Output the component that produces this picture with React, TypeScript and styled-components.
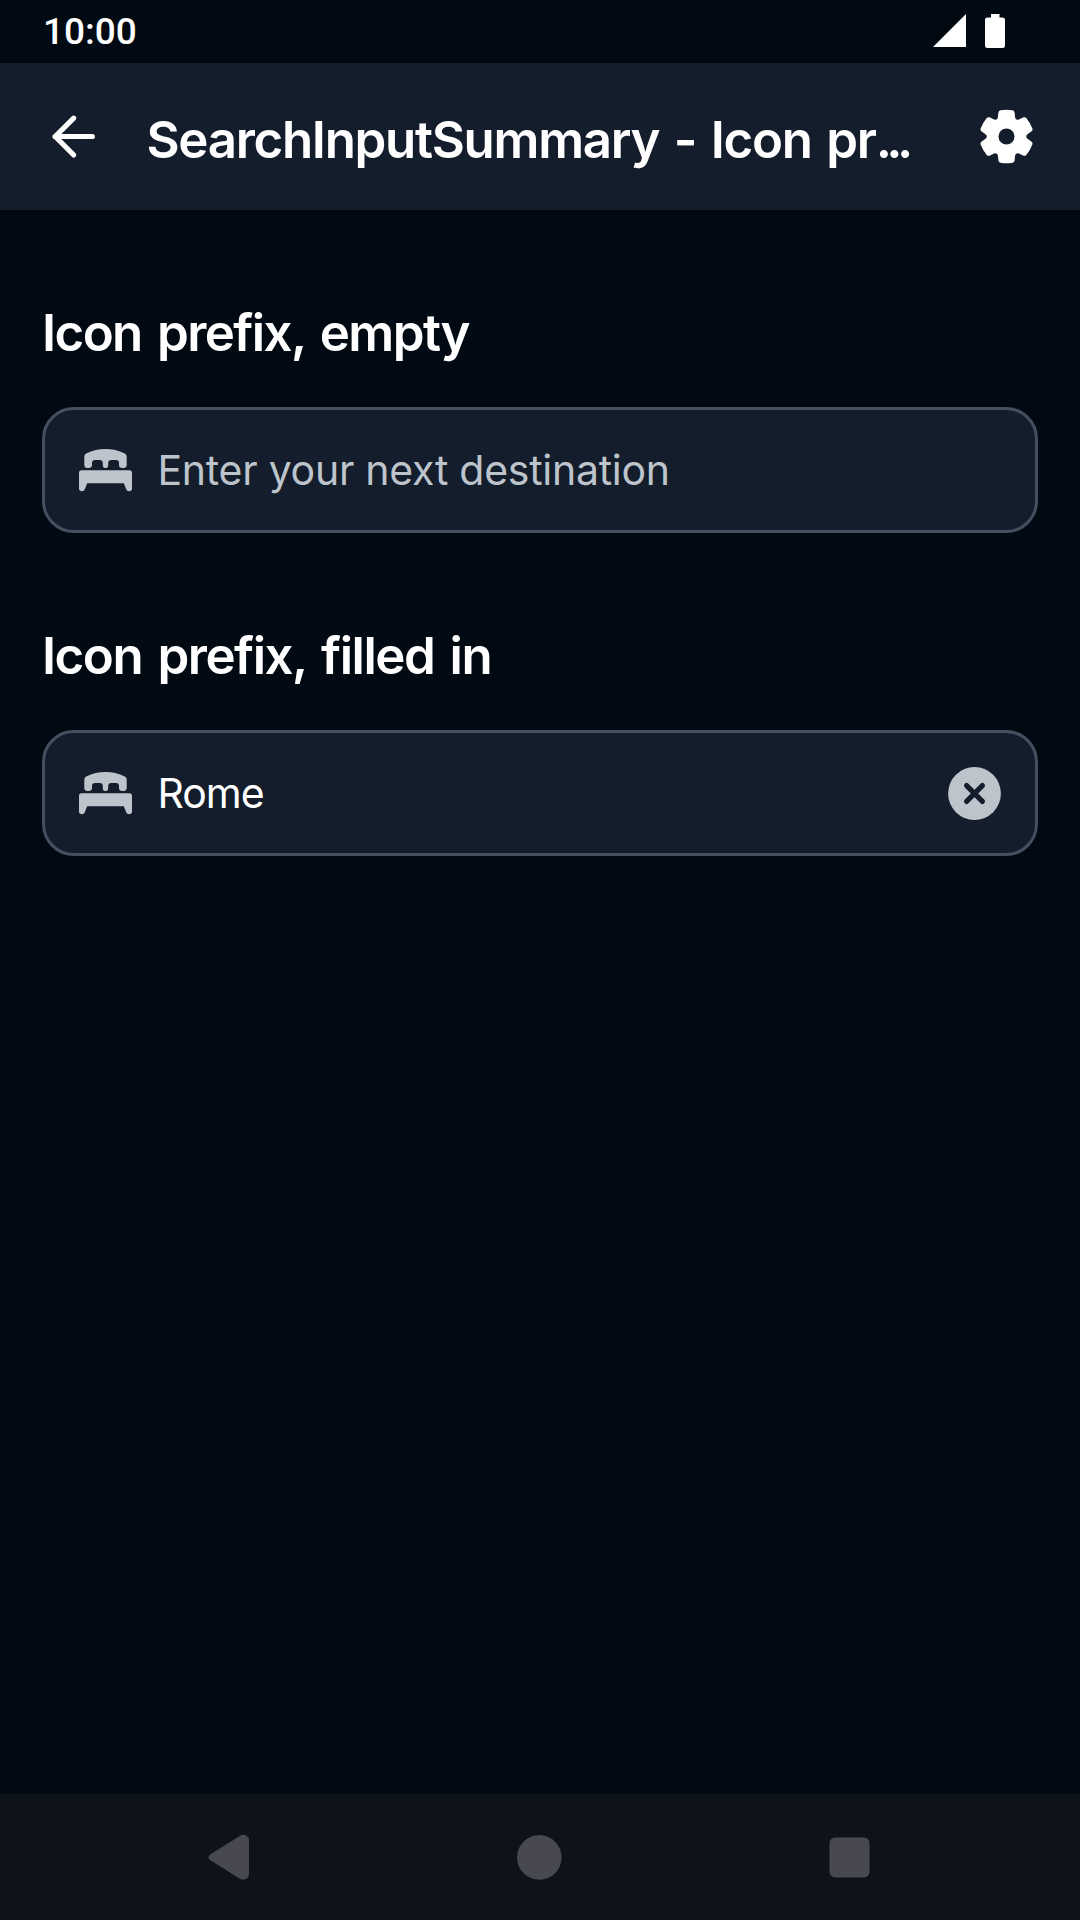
import React from "react";
import styled, { createGlobalStyle } from "styled-components";

const color = {
  canvas: "#010913",
  surface: "#141d2b",
  line: "#44505f",
  textPrimary: "#ffffff",
  textSecondary: "#bdc4cb",
  navBar: "#0e131b",
  navIcon: "#484850",
};

const GlobalStyle = createGlobalStyle`
  * { box-sizing: border-box; }
  body { margin: 0; background: ${color.canvas}; }
  svg { display: block; flex: none; }
`;

const Screen = styled.div`
  display: flex;
  flex-direction: column;
  width: 1080px;
  height: 1920px;
  overflow: hidden;
  background: ${color.canvas};
  color: ${color.textPrimary};
  font-family: Inter, "Liberation Sans", sans-serif;
`;

const StatusBar = styled.div`
  display: flex;
  align-items: center;
  justify-content: space-between;
  height: 63px;
  padding: 0 75px 0 43px;
`;

const Clock = styled.span`
  font: 500 37px/43px Roboto, sans-serif;
`;

const StatusIcons = styled.div`
  display: flex;
  gap: 19px;
  padding-bottom: 1px;
`;

const AppBar = styled.header`
  display: flex;
  align-items: center;
  height: 147px;
  padding: 0 42px;
  background: ${color.surface};
`;

const IconButton = styled.button`
  flex: none;
  padding: 0;
  border: 0;
  background: none;
  color: inherit;
`;

const Title = styled.h1`
  flex: 1;
  margin: 0 0 0 41.5px;
  padding-top: 6px;
  font-size: 51px;
  font-weight: 630;
  line-height: 60px;
  letter-spacing: -1.3px;
  word-spacing: 3px;
  white-space: nowrap;
`;

const Ellipsis = styled.span`
  letter-spacing: -5.6px;
`;

const Content = styled.main`
  flex: 1;
  padding: 0 42px;
`;

const Section = styled.section`
  padding-top: 92.5px;
`;

const SectionTitle = styled.h2<{ $tracking: number }>`
  margin: 0 0 44.5px;
  font-size: 51px;
  font-weight: 630;
  line-height: 60px;
  letter-spacing: ${(p) => p.$tracking}px;
  word-spacing: 4px;
  white-space: nowrap;
`;

const SearchField = styled.div`
  display: flex;
  align-items: center;
  height: 126px;
  padding: 0 29px;
  border: 3px solid ${color.line};
  border-radius: 32px;
  background: ${color.surface};
  color: ${color.textSecondary};
`;

const FieldText = styled.span<{ $filled?: boolean; $tracking: number }>`
  flex: 1;
  margin-left: 20.5px;
  font-size: 41px;
  font-weight: 400;
  line-height: 54px;
  letter-spacing: ${(p) => p.$tracking}px;
  white-space: nowrap;
  color: ${(p) => (p.$filled ? color.textPrimary : color.textSecondary)};
`;

const NavBar = styled.nav`
  display: flex;
  align-items: center;
  justify-content: space-between;
  height: 126px;
  padding: 0 210px 0 208px;
  background: ${color.navBar};
  color: ${color.navIcon};
`;

const BackArrow = () => (
  <svg width="63" height="63" viewBox="0 0 63 63" fill="none" stroke="currentColor" strokeWidth="5.2" strokeLinecap="round" strokeLinejoin="round">
    <path d="M50.3 31.5H13M31.7 13.2L13.2 31.5L31.7 50" />
  </svg>
);

/* One tooth, drawn around the origin and repeated every 60 degrees. */
const tooth: [string, number[]][] = [
  ["Q", [-27, -50, -25.5, -57]],
  ["L", [-23.8, -72]],
  ["Q", [-23, -77, -18, -78]],
  ["Q", [0, -81, 18, -78]],
  ["Q", [23, -77, 23.8, -72]],
  ["L", [25.5, -57]],
  ["Q", [27, -50, 29.5, -51.1]],
];

const rotated = (points: number[], turn: number) => {
  const a = (turn * Math.PI) / 3;
  const out: string[] = [];
  for (let i = 0; i < points.length; i += 2) {
    const x = points[i] / 2.96;
    const y = points[i + 1] / 2.96;
    out.push((x * Math.cos(a) - y * Math.sin(a)).toFixed(2));
    out.push((x * Math.sin(a) + y * Math.cos(a)).toFixed(2));
  }
  return out.join(" ");
};

const gearPath =
  "M" + rotated([-29.5, -51.1], 0) +
  [0, 1, 2, 3, 4, 5].map((k) => tooth.map(([c, pts]) => c + rotated(pts, k)).join("")).join("") +
  "Z M8 0A8 8 0 1 0 -8 0A8 8 0 1 0 8 0Z";

const Gear = () => (
  <svg width="63" height="63" viewBox="-31.5 -31.5 63 63" fill="currentColor">
    <path fillRule="evenodd" d={gearPath} />
  </svg>
);

const Signal = () => (
  <svg width="33" height="34" viewBox="0 0 33 34" fill="currentColor">
    <path d="M0 33L33 0V33Z" />
  </svg>
);

const Battery = () => (
  <svg width="20" height="34" viewBox="0 0 20 34" fill="currentColor">
    <path d="M6 0H14.5V3.5H17.5Q20 3.5 20 6V31.5Q20 34 17.5 34H2.5Q0 34 0 31.5V6Q0 3.5 2.5 3.5H6Z" />
  </svg>
);

const Bed = () => (
  <svg width="63" height="63" viewBox="0 -1 63 63" fill="currentColor">
    <path d="M10.3 16.6Q10.3 14.4 12.2 13.4Q21.5 9 31.5 9Q41.5 9 50.8 13.4Q52.7 14.4 52.7 16.6V24.8Q52.7 28 49.5 28H48.2Q45 28 45 24.8V23Q45 20 42 20H37.3Q34.2 20 34.2 23V25.2Q34.2 28 31.5 28Q28.8 28 28.8 25.2V23Q28.8 20 25.7 20H21Q18 20 18 23V24.8Q18 28 14.8 28H13.5Q10.3 28 10.3 24.8Z" />
    <path d="M7.5 30.3H55.5Q58 30.3 58 32.8V48.5Q58 51.3 55 51.3Q52.8 51.3 52.2 49.3L49.8 43.2H13.2L10.8 49.3Q10.2 51.3 8 51.3Q5 51.3 5 48.5V32.8Q5 30.3 7.5 30.3Z" />
  </svg>
);

const Clear = () => (
  <svg width="63" height="63" viewBox="0 0 63 63">
    <circle cx="31.5" cy="31.5" r="26.4" fill="currentColor" />
    <path d="M23.6 23.6L39.4 39.4M39.4 23.6L23.6 39.4" fill="none" stroke={color.surface} strokeWidth="5.2" strokeLinecap="round" />
  </svg>
);

const NavBack = () => (
  <svg width="42" height="46" viewBox="0 0 42 46" fill="currentColor">
    <path d="M32.2 1.7Q35.2 0.1 38.2 1.6Q41 3.3 41 6.6V40Q41 43.3 38.2 45Q35.2 46 32.2 44.9L2.5 26.3Q-1.3 23.3 2.5 20.3Z" />
  </svg>
);

const NavHome = () => (
  <svg width="46" height="46" viewBox="0 0 46 46" fill="currentColor">
    <circle cx="22.3" cy="23.4" r="22.3" />
  </svg>
);

const NavRecents = () => (
  <svg width="41" height="42" viewBox="0 0 41 42" fill="currentColor">
    <rect x="0.5" y="1.4" width="40" height="40" rx="5.5" />
  </svg>
);

export default function App() {
  return (
    <Screen>
      <GlobalStyle />
      <StatusBar>
        <Clock>10:00</Clock>
        <StatusIcons>
          <Signal />
          <Battery />
        </StatusIcons>
      </StatusBar>
      <AppBar>
        <IconButton aria-label="Back">
          <BackArrow />
        </IconButton>
        <Title>
          SearchInputSummary - Icon pr<Ellipsis>...</Ellipsis>
        </Title>
        <IconButton aria-label="Settings">
          <Gear />
        </IconButton>
      </AppBar>
      <Content>
        <Section>
          <SectionTitle $tracking={-1.6}>Icon prefix, empty</SectionTitle>
          <SearchField>
            <Bed />
            <FieldText $tracking={-0.27}>Enter your next destination</FieldText>
          </SearchField>
        </Section>
        <Section>
          <SectionTitle $tracking={-1.5}>Icon prefix, filled in</SectionTitle>
          <SearchField>
            <Bed />
            <FieldText $filled $tracking={-1}>Rome</FieldText>
            <IconButton aria-label="Clear">
              <Clear />
            </IconButton>
          </SearchField>
        </Section>
      </Content>
      <NavBar>
        <NavBack />
        <NavHome />
        <NavRecents />
      </NavBar>
    </Screen>
  );
}
